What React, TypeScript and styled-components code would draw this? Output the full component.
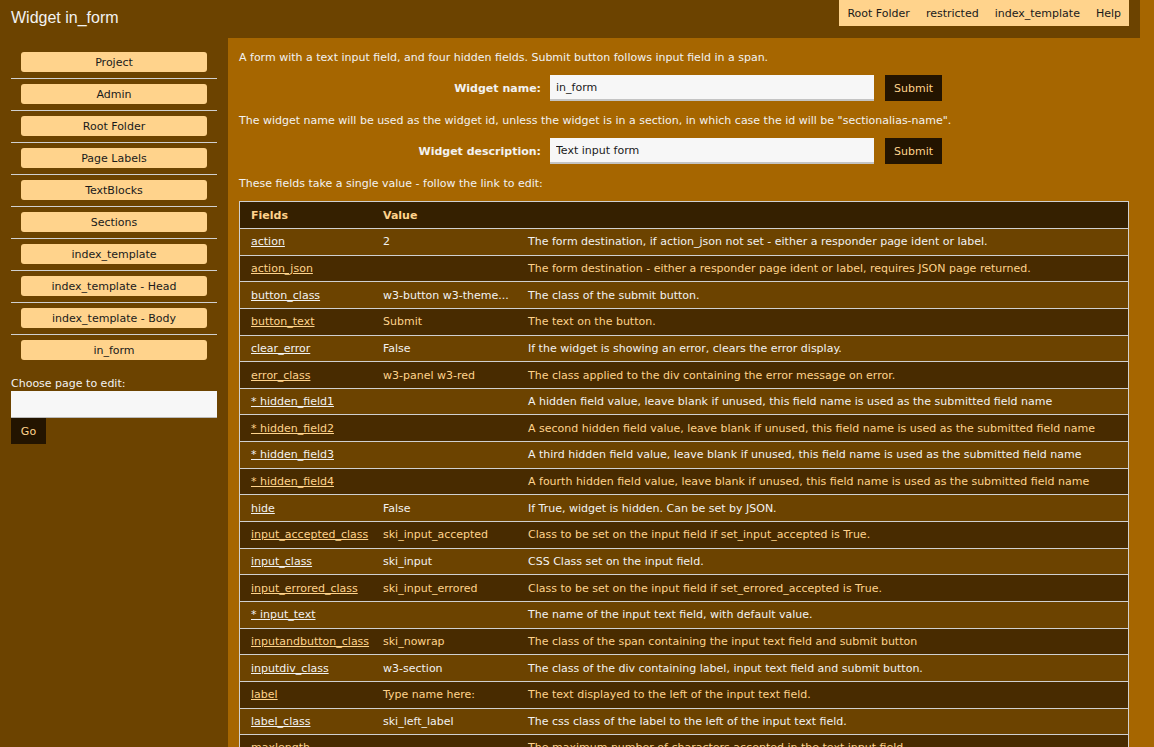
import React from 'react';
import styled, { createGlobalStyle } from 'styled-components';

const GlobalStyle = createGlobalStyle`
  html, body {
    margin: 0;
    padding: 0;
    background: #a66600;
    font-family: "DejaVu Sans", Verdana, sans-serif;
    font-size: 11px;
  }
`;

const light = '#ffd38c';
const darkRow = '#6c4300';
const darkerRow = '#482b00';

const Header = styled.header`
  width: 1140px;
  height: 38px;
  background: ${darkRow};
  display: flex;
  justify-content: space-between;
  align-items: flex-start;
`;

const Title = styled.h1`
  margin: 0;
  padding: 9px 11px 0;
  font-family: "Liberation Sans", Arial, sans-serif;
  font-weight: normal;
  font-size: 16px;
  color: #f2f2f2;
`;

const TopNav = styled.nav`
  display: flex;
  background: ${light};
  height: 26px;
  align-items: center;
  margin-right: 11px;
`;

const TopLink = styled.a`
  color: #1a1a1a;
  text-decoration: none;
  padding: 0 8px;
`;

const Page = styled.div`
  display: flex;
  align-items: stretch;
`;

const Sidebar = styled.aside`
  width: 228px;
  flex: none;
  background: ${darkRow};
  padding: 14px 11px 0;
  box-sizing: border-box;
  min-height: 709px;
`;

const NavItem = styled.div<{ $last?: boolean }>`
  padding: 0 10px 6px;
  border-bottom: ${p => (p.$last ? 'none' : '1px solid #d0d0d0')};
  margin-bottom: 5px;
`;

const NavButton = styled.button`
  display: block;
  width: 100%;
  height: 20px;
  border: none;
  border-radius: 3px;
  background: ${light};
  color: #1a1a1a;
  font: inherit;
  padding: 0;
`;

const ChooseLabel = styled.div`
  color: #f2f2f2;
  margin-top: 11px;
  margin-bottom: 1px;
`;

const ChooseInput = styled.input`
  display: block;
  width: 100%;
  box-sizing: border-box;
  height: 27px;
  border: none;
  border-bottom: 1px solid #bbb;
  background: #f7f7f7;
`;

const GoButton = styled.button`
  height: 26px;
  width: 35px;
  border: none;
  background: #231400;
  color: ${light};
  font: inherit;
  padding: 0;
`;

const Main = styled.main`
  flex: 1;
  padding: 13px 25px 0 11px;
  color: #f2f2f2;
`;

const Para = styled.p`
  margin: 0;
  line-height: 13px;
`;

const FormRow = styled.div`
  display: grid;
  grid-template-columns: 302px 324px 59px;
  column-gap: 9px;
  align-items: center;
  margin: 11px 0 13px;
`;

const FormLabel = styled.label`
  text-align: right;
  font-weight: bold;
`;

const FormInput = styled.input`
  height: 26px;
  box-sizing: border-box;
  border: none;
  border-bottom: 2px solid #c4c4c4;
  background: #f7f7f7;
  padding: 0 6px;
  font: inherit;
  color: #1a1a1a;
`;

const SubmitButton = styled.button`
  height: 26px;
  width: 57px;
  margin-left: 2px;
  border: none;
  background: #231400;
  color: ${light};
  font: inherit;
  padding: 0;
`;

const Table = styled.table`
  width: 890px;
  margin-top: 11px;
  border-collapse: collapse;
  border: 1px solid #d0d0d0;
  table-layout: fixed;
`;

const HeadCell = styled.th<{ $w?: number }>`
  background: #352000;
  color: ${light};
  text-align: left;
  font-weight: bold;
  height: 26px;
  padding: 0 11px;
  ${p => (p.$w ? `width: ${p.$w}px;` : '')}
`;

const Row = styled.tr<{ $alt: boolean }>`
  background: ${p => (p.$alt ? darkerRow : darkRow)};
  color: ${p => (p.$alt ? light : '#f2f2f2')};
  border-top: 1px solid #d0d0d0;
`;

const Cell = styled.td`
  height: 25.65px;
  padding: 0 11px;
  white-space: nowrap;
  overflow: hidden;
`;

const FieldLink = styled.a`
  color: inherit;
  text-decoration: underline;
`;

const navItems = [
  'Project',
  'Admin',
  'Root Folder',
  'Page Labels',
  'TextBlocks',
  'Sections',
  'index_template',
  'index_template - Head',
  'index_template - Body',
  'in_form'
];

const fields: [string, string, string][] = [
  ['action', '2', 'The form destination, if action_json not set - either a responder page ident or label.'],
  ['action_json', '', 'The form destination - either a responder page ident or label, requires JSON page returned.'],
  ['button_class', 'w3-button w3-theme...', 'The class of the submit button.'],
  ['button_text', 'Submit', 'The text on the button.'],
  ['clear_error', 'False', 'If the widget is showing an error, clears the error display.'],
  ['error_class', 'w3-panel w3-red', 'The class applied to the div containing the error message on error.'],
  ['* hidden_field1', '', 'A hidden field value, leave blank if unused, this field name is used as the submitted field name'],
  ['* hidden_field2', '', 'A second hidden field value, leave blank if unused, this field name is used as the submitted field name'],
  ['* hidden_field3', '', 'A third hidden field value, leave blank if unused, this field name is used as the submitted field name'],
  ['* hidden_field4', '', 'A fourth hidden field value, leave blank if unused, this field name is used as the submitted field name'],
  ['hide', 'False', 'If True, widget is hidden. Can be set by JSON.'],
  ['input_accepted_class', 'ski_input_accepted', 'Class to be set on the input field if set_input_accepted is True.'],
  ['input_class', 'ski_input', 'CSS Class set on the input field.'],
  ['input_errored_class', 'ski_input_errored', 'Class to be set on the input field if set_errored_accepted is True.'],
  ['* input_text', '', 'The name of the input text field, with default value.'],
  ['inputandbutton_class', 'ski_nowrap', 'The class of the span containing the input text field and submit button'],
  ['inputdiv_class', 'w3-section', 'The class of the div containing label, input text field and submit button.'],
  ['label', 'Type name here:', 'The text displayed to the left of the input text field.'],
  ['label_class', 'ski_left_label', 'The css class of the label to the left of the input text field.'],
  ['maxlength', '', 'The maximum number of characters accepted in the text input field.']
];

const App = () => (
  <>
    <GlobalStyle />
    <Header>
      <Title>Widget in_form</Title>
      <TopNav>
        <TopLink href="#">Root Folder</TopLink>
        <TopLink href="#">restricted</TopLink>
        <TopLink href="#">index_template</TopLink>
        <TopLink href="#">Help</TopLink>
      </TopNav>
    </Header>
    <Page>
      <Sidebar>
        {navItems.map((n, i) => (
          <NavItem key={n} $last={i === navItems.length - 1}>
            <NavButton>{n}</NavButton>
          </NavItem>
        ))}
        <ChooseLabel>Choose page to edit:</ChooseLabel>
        <ChooseInput />
        <GoButton>Go</GoButton>
      </Sidebar>
      <Main>
        <Para>A form with a text input field, and four hidden fields. Submit button follows input field in a span.</Para>
        <FormRow>
          <FormLabel>Widget name:</FormLabel>
          <FormInput defaultValue="in_form" />
          <SubmitButton>Submit</SubmitButton>
        </FormRow>
        <Para>
          The widget name will be used as the widget id, unless the widget is in a section, in which case the id will be
          "sectionalias-name".
        </Para>
        <FormRow>
          <FormLabel>Widget description:</FormLabel>
          <FormInput defaultValue="Text input form" />
          <SubmitButton>Submit</SubmitButton>
        </FormRow>
        <Para>These fields take a single value - follow the link to edit:</Para>
        <Table>
          <thead>
            <tr>
              <HeadCell $w={110}>Fields</HeadCell>
              <HeadCell $w={123}>Value</HeadCell>
              <HeadCell />
            </tr>
          </thead>
          <tbody>
            {fields.map(([f, v, d], i) => (
              <Row key={f} $alt={i % 2 === 1}>
                <Cell>
                  <FieldLink href="#">{f}</FieldLink>
                </Cell>
                <Cell>{v}</Cell>
                <Cell>{d}</Cell>
              </Row>
            ))}
          </tbody>
        </Table>
      </Main>
    </Page>
  </>
);

export default App;
